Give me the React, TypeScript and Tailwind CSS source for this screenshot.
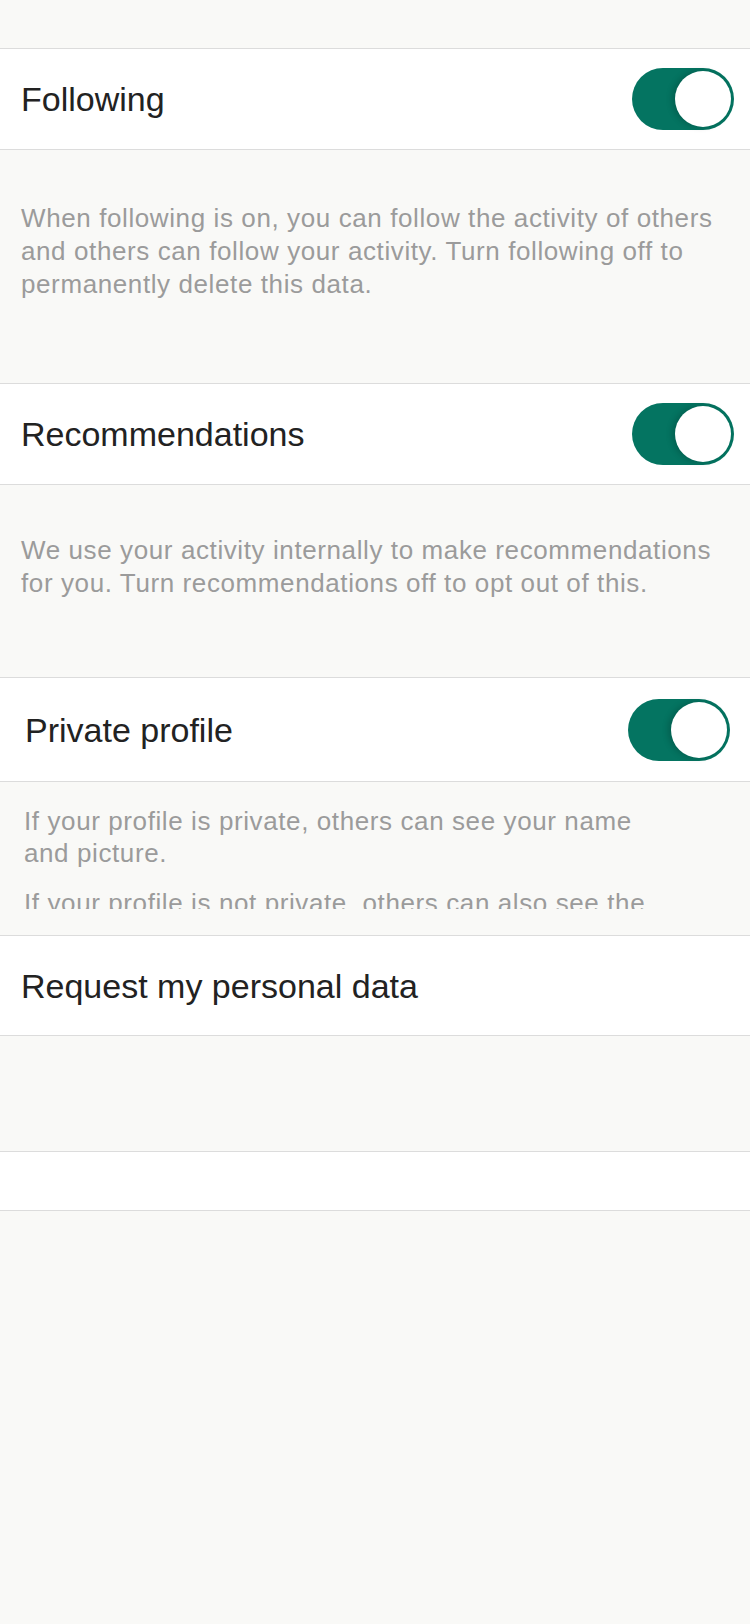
const font = { fontFamily: '"Liberation Sans", Arial, sans-serif' };

function Toggle() {
  return (
    <div className="flex h-[62px] w-[102px] items-center justify-end rounded-full bg-[#047461] p-[3px]">
      <div className="h-[56px] w-[56px] rounded-full bg-white shadow-[-3px_0_6px_rgba(0,0,0,0.18)]" />
    </div>
  );
}

function ToggleRow({ label, indent }: { label: string; indent?: boolean }) {
  return (
    <div
      className={
        indent
          ? 'flex h-[104px] items-center justify-between border-b border-[#dcdcdc] bg-white pl-[25px] pr-[20px]'
          : 'flex h-[101px] items-center justify-between border-b border-[#dcdcdc] bg-white pl-[21px] pr-[16px]'
      }
    >
      <span className="text-[34px] leading-none text-[#222]">{label}</span>
      <Toggle />
    </div>
  );
}

export default function App() {
  return (
    <div className="min-h-[1624px] w-[750px] bg-[#f9f9f7]" style={font}>
      <div className="h-[49px] border-b border-[#dcdcdc]" />

      <ToggleRow label="Following" />
      <div className="h-[234px] border-b border-[#dcdcdc] pl-[21px] pr-[21px] pt-[52px]">
        <p className="text-[26px] leading-[33px] tracking-[0.6px] text-[#9b9b9b]">
          When following is on, you can follow the activity of others and others can follow your activity. Turn
          following off to permanently delete this data.
        </p>
      </div>

      <ToggleRow label="Recommendations" />
      <div className="h-[193px] border-b border-[#dcdcdc] pl-[21px] pr-[21px] pt-[49px]">
        <p className="text-[26px] leading-[33px] tracking-[0.6px] text-[#9b9b9b]">
          We use your activity internally to make recommendations for you. Turn recommendations off to opt out of
          this.
        </p>
      </div>

      <ToggleRow label="Private profile" indent />
      <div className="h-[154px] border-b border-[#dcdcdc] pb-[26px]">
        <div className="h-[127px] overflow-hidden pl-[24px] pt-[23px]">
          <div className="w-[640px] text-[26px] leading-[32px] tracking-[0.6px] text-[#9b9b9b]">
            <p>If your profile is private, others can see your name and picture.</p>
            <p className="mt-[18px]">
              If your profile is not private, others can also see the activity you share with them.
            </p>
          </div>
        </div>
      </div>

      <div className="flex h-[100px] items-center border-b border-[#dcdcdc] bg-white pl-[21px]">
        <span className="text-[34px] leading-none text-[#222]">Request my personal data</span>
      </div>

      <div className="h-[116px] border-b border-[#dcdcdc]" />
      <div className="h-[59px] border-b border-[#dcdcdc] bg-white" />
    </div>
  );
}
